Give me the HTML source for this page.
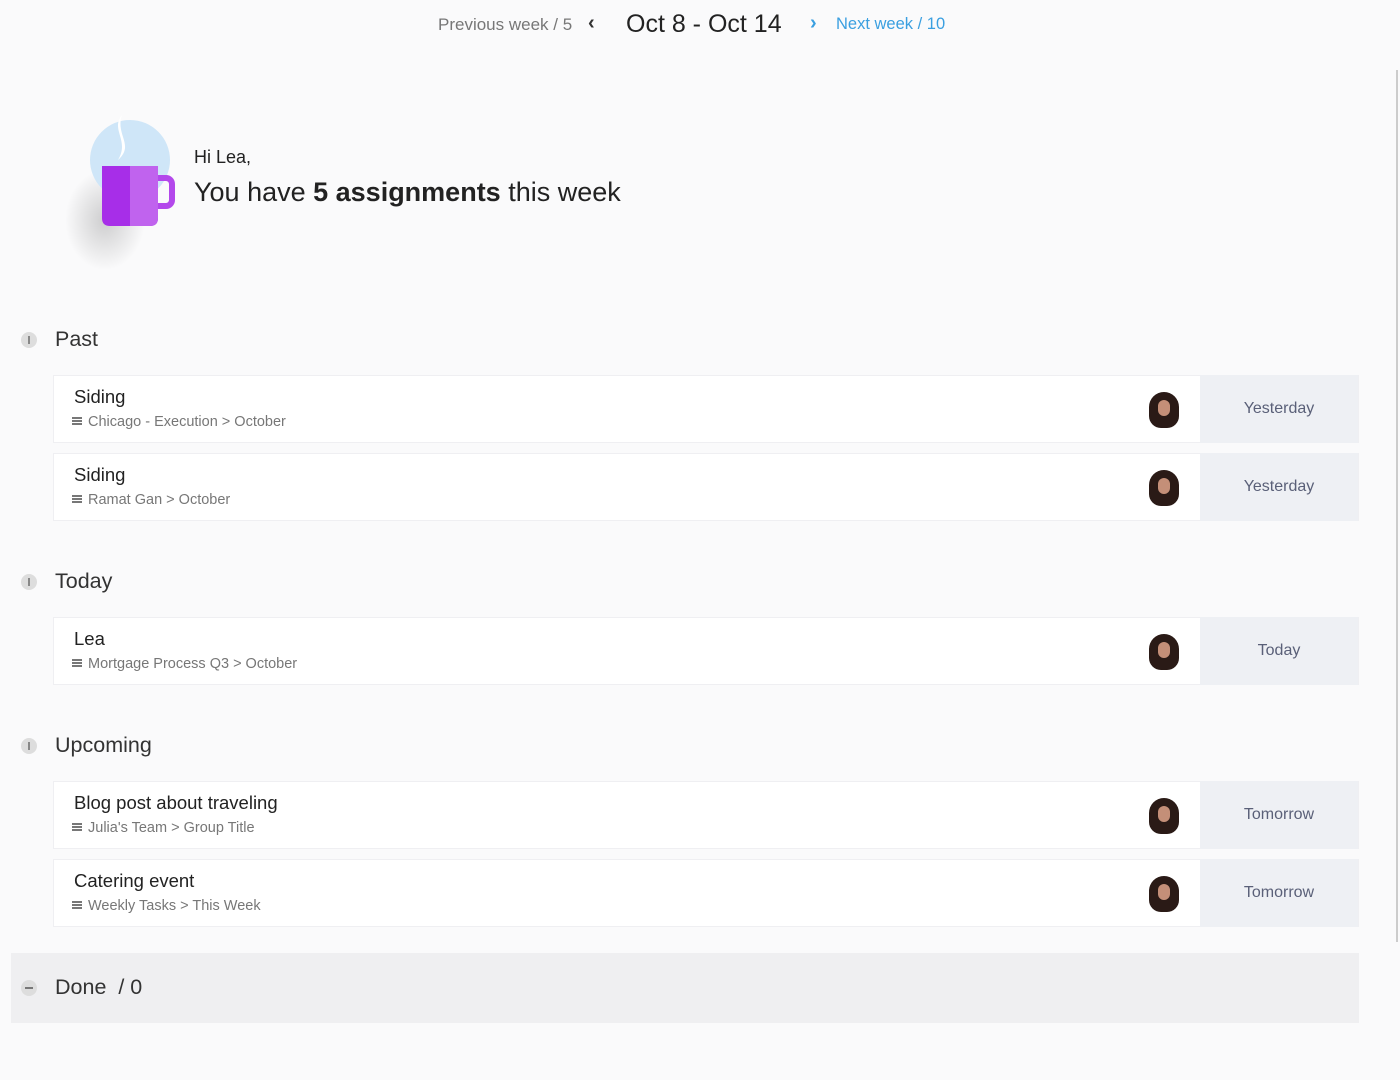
<!DOCTYPE html>
<html><head><style>
*{margin:0;padding:0;box-sizing:border-box}
body{width:1400px;height:1080px;background:#fafafb;font-family:"Liberation Sans",sans-serif;position:relative;overflow:hidden;color:#333}
.a{position:absolute;white-space:nowrap}
.card{position:absolute;left:53px;width:1306px;height:68px;background:#fff;border:1px solid #efeff2}
.card .t{position:absolute;left:20px;top:10px;font-size:18.5px;color:#222}
.card .s{position:absolute;left:18px;top:38px;font-size:14.5px;color:#777}
.card .d{position:absolute;right:0;top:-1px;width:158px;height:68px;background:#eef0f4;color:#5a6078;font-size:16px;text-align:center;line-height:68px}
.av{position:absolute;left:1095px;top:16px;width:30px;height:36px;border-radius:15px 15px 12px 12px;background:#2a1a16;overflow:hidden}
.av:after{content:"";position:absolute;left:9px;top:8px;width:12px;height:16px;border-radius:6px;background:#c48f78}
.sec{position:absolute;left:55px;font-size:21.5px;color:#333}
.dot{position:absolute;left:21px;width:16px;height:16px;border-radius:50%;background:#ddd}
.dot:after{content:"";position:absolute;left:7px;top:4px;width:2px;height:8px;background:#888}
.ham{display:inline-block;width:10px;height:8px;border-top:2px solid #777;border-bottom:2px solid #777;position:relative;margin-right:6px;vertical-align:1px}
.ham:after{content:"";position:absolute;left:0;top:1px;width:10px;height:2px;background:#777}
</style></head><body>
<div class="a" style="left:438px;top:15px;font-size:17px;color:#777">Previous week / 5</div>
<div class="a" style="left:588px;top:12px;font-size:20px;color:#333;font-weight:bold">‹</div>
<div class="a" style="left:626px;top:10px;font-size:25px;color:#222">Oct 8 - Oct 14</div>
<div class="a" style="left:810px;top:12px;font-size:20px;color:#3a9fe0;font-weight:bold">›</div>
<div class="a" style="left:836px;top:15px;font-size:16.5px;color:#3a9fe0">Next week / 10</div>
<div class="a" style="left:1396px;top:70px;width:2px;height:872px;background:#ccc"></div>

<svg class="a" style="left:60px;top:110px" width="130" height="160">
<defs><radialGradient id="sh"><stop offset="0" stop-color="#000" stop-opacity=".18"/><stop offset="1" stop-color="#000" stop-opacity="0"/></radialGradient></defs>
<ellipse cx="45" cy="110" rx="40" ry="50" fill="url(#sh)"/>
<circle cx="70" cy="50" r="40" fill="#cfe6f8"/>
<path d="M62 5 C50 20 70 30 58 50 C75 35 55 25 62 5Z" fill="#fff"/>
<path d="M42 56 h56 v52 q0 8 -8 8 h-40 q-8 0 -8 -8z" fill="#a72ee8"/>
<path d="M70 56 h28 v52 q0 8 -8 8 h-20z" fill="#c063ee"/>
<path d="M98 68 h8 a6 6 0 0 1 6 6 v16 a6 6 0 0 1 -6 6 h-8" fill="none" stroke="#b348eb" stroke-width="6"/>
</svg>
<div class="a" style="left:194px;top:147px;font-size:18px;color:#222">Hi Lea,</div>
<div class="a" style="left:194px;top:177px;font-size:27px;color:#222">You have <b>5 assignments</b> this week</div>

<div class="dot" style="top:332px"></div><div class="sec" style="top:327px">Past</div>
<div class="card" style="top:375px"><div class="t">Siding</div><div class="s"><span class="ham"></span>Chicago - Execution &gt; October</div><div class="av"></div><div class="d">Yesterday</div></div>
<div class="card" style="top:453px"><div class="t">Siding</div><div class="s"><span class="ham"></span>Ramat Gan &gt; October</div><div class="av"></div><div class="d">Yesterday</div></div>

<div class="dot" style="top:574px"></div><div class="sec" style="top:569px">Today</div>
<div class="card" style="top:617px"><div class="t">Lea</div><div class="s"><span class="ham"></span>Mortgage Process Q3 &gt; October</div><div class="av"></div><div class="d">Today</div></div>

<div class="dot" style="top:738px"></div><div class="sec" style="top:733px">Upcoming</div>
<div class="card" style="top:781px"><div class="t">Blog post about traveling</div><div class="s"><span class="ham"></span>Julia's Team &gt; Group Title</div><div class="av"></div><div class="d">Tomorrow</div></div>
<div class="card" style="top:859px"><div class="t">Catering event</div><div class="s"><span class="ham"></span>Weekly Tasks &gt; This Week</div><div class="av"></div><div class="d">Tomorrow</div></div>

<div class="a" style="left:11px;top:953px;width:1348px;height:70px;background:#efeff1"></div>
<div class="a" style="left:21px;top:980px;width:16px;height:16px;border-radius:50%;background:#ddd"></div>
<div class="a" style="left:25px;top:987px;width:8px;height:2px;background:#777"></div>
<div class="a" style="left:55px;top:975px;font-size:21.5px;color:#333">Done &nbsp;/ 0</div>
</body></html>
